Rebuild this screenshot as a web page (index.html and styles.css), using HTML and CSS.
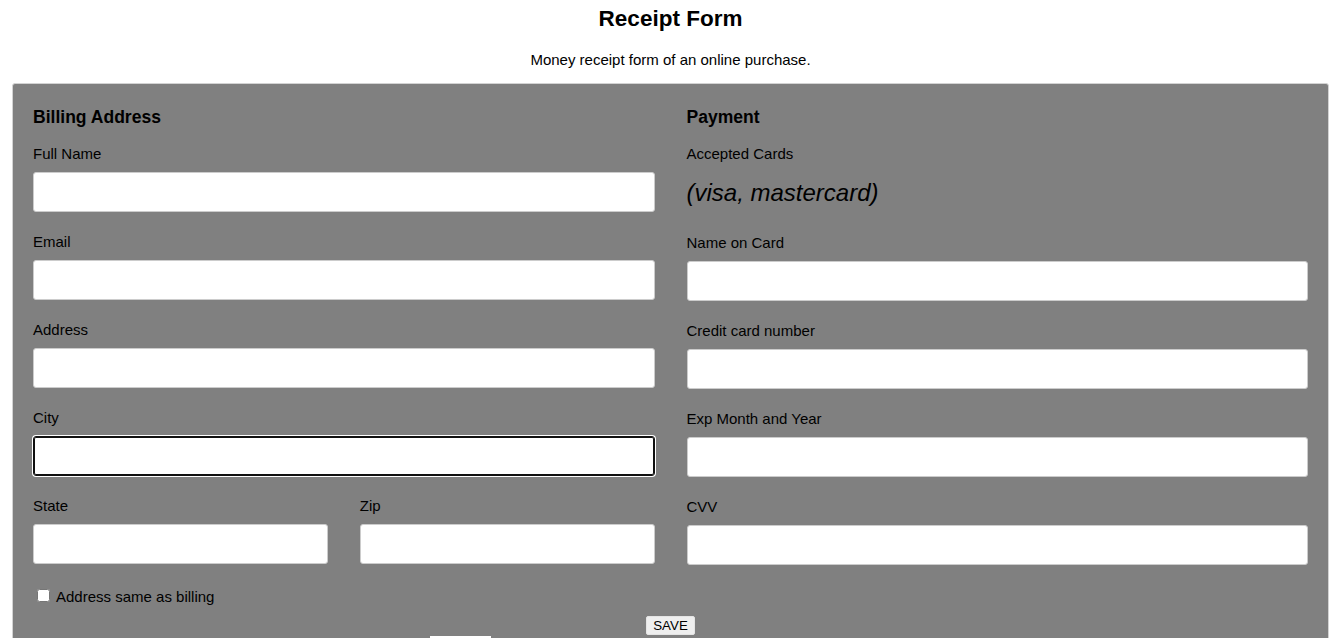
FILE: index.html
```html
<!DOCTYPE html>
<html lang="en">
<head>
<meta charset="utf-8">
<title>Receipt Form</title>
<link rel="stylesheet" href="styles.css">
</head>
<body>
<main class="page">
  <h2 class="title">Receipt Form</h2>
  <p class="subtitle">Money receipt form of an online purchase.</p>
  <form class="container">
    <div class="columns">
      <section class="col">
        <h3 class="section-title">Billing Address</h3>
        <label class="field-label" for="fname">Full Name</label>
        <input class="field" type="text" id="fname">
        <label class="field-label" for="email">Email</label>
        <input class="field" type="text" id="email">
        <label class="field-label" for="adr">Address</label>
        <input class="field" type="text" id="adr">
        <label class="field-label" for="city">City</label>
        <input class="field focused" type="text" id="city">
        <div class="pair">
          <div>
            <label class="field-label" for="state">State</label>
            <input class="field" type="text" id="state">
          </div>
          <div>
            <label class="field-label" for="zip">Zip</label>
            <input class="field" type="text" id="zip">
          </div>
        </div>
      </section>
      <section class="col">
        <h3 class="section-title">Payment</h3>
        <label class="field-label">Accepted Cards</label>
        <div class="icon-container">(visa, mastercard)</div>
        <label class="field-label" for="cname">Name on Card</label>
        <input class="field" type="text" id="cname">
        <label class="field-label" for="ccnum">Credit card number</label>
        <input class="field" type="text" id="ccnum">
        <label class="field-label" for="expy">Exp Month and Year</label>
        <input class="field" type="text" id="expy">
        <label class="field-label" for="cvv">CVV</label>
        <input class="field" type="text" id="cvv">
      </section>
    </div>
    <label class="check-row"><input class="check" type="checkbox"> Address same as billing</label>
    <div class="actions"><button class="save-btn" type="button">SAVE</button></div>
    <div class="extra"><span class="extra-box"></span></div>
  </form>
</main>
</body>
</html>
```
FILE: styles.css
```css
html, body {
  margin: 0;
  padding: 0;
  background: #ffffff;
}

body {
  font-family: "Liberation Sans", Arial, sans-serif;
  font-size: 15px;
  color: #000;
  overflow: hidden;
}

.page {
  padding: 6px 6px 0 12px;
}

.title {
  margin: 0 0 18.7px;
  font-size: 22.5px;
  font-weight: bold;
  text-align: center;
}

.subtitle {
  margin: 0 0 15px;
  text-align: center;
}

.container {
  background: #808080;
  border: 1px solid #d3d3d3;
  border-radius: 3px;
  padding: 5px 20px 15px;
}

.columns {
  display: grid;
  grid-template-columns: 1fr 1fr;
  column-gap: 32px;
}

.col {
  display: flex;
  flex-direction: column;
}

.section-title {
  margin: 18.55px 0 17.55px;
  font-size: 17.55px;
  font-weight: bold;
  line-height: 20.2px;
}

.field-label {
  display: block;
  line-height: 18px;
  margin-bottom: 9px;
}

.field {
  display: block;
  box-sizing: border-box;
  width: 100%;
  height: 40px;
  margin: 0 0 21px;
  padding: 12px;
  border: 1px solid #cccccc;
  border-radius: 3px;
  background: #fff;
  font-family: "Liberation Sans", Arial, sans-serif;
  font-size: 13.33px;
}

.field.focused {
  border-color: #101010;
  box-shadow: inset 0 0 0 1px #101010, 0 0 0 1px #ffffff;
  outline: none;
}

.pair {
  display: grid;
  grid-template-columns: 1fr 1fr;
  column-gap: 32px;
}

.icon-container {
  padding: 7px 0;
  margin-bottom: 20px;
  font-size: 24px;
  font-style: italic;
  line-height: 27.6px;
}

.check-row {
  display: flex;
  align-items: center;
  margin-top: 2px;
  line-height: 18px;
}

.check {
  width: 13px;
  height: 13px;
  margin: -2px 6px 0 4px;
}

.actions {
  margin-top: 10px;
  text-align: center;
}

.save-btn {
  font-family: "Liberation Sans", Arial, sans-serif;
  font-size: 13.33px;
  line-height: 15px;
  padding: 1px 6px;
  background: #efefef;
  border: 1px solid #e4e4e4;
  border-radius: 2px;
  color: #000;
}

.extra {
  margin-top: 1px;
  padding-left: 397px;
}

.extra-box {
  display: block;
  width: 61px;
  height: 30px;
  background: #fff;
}
```
